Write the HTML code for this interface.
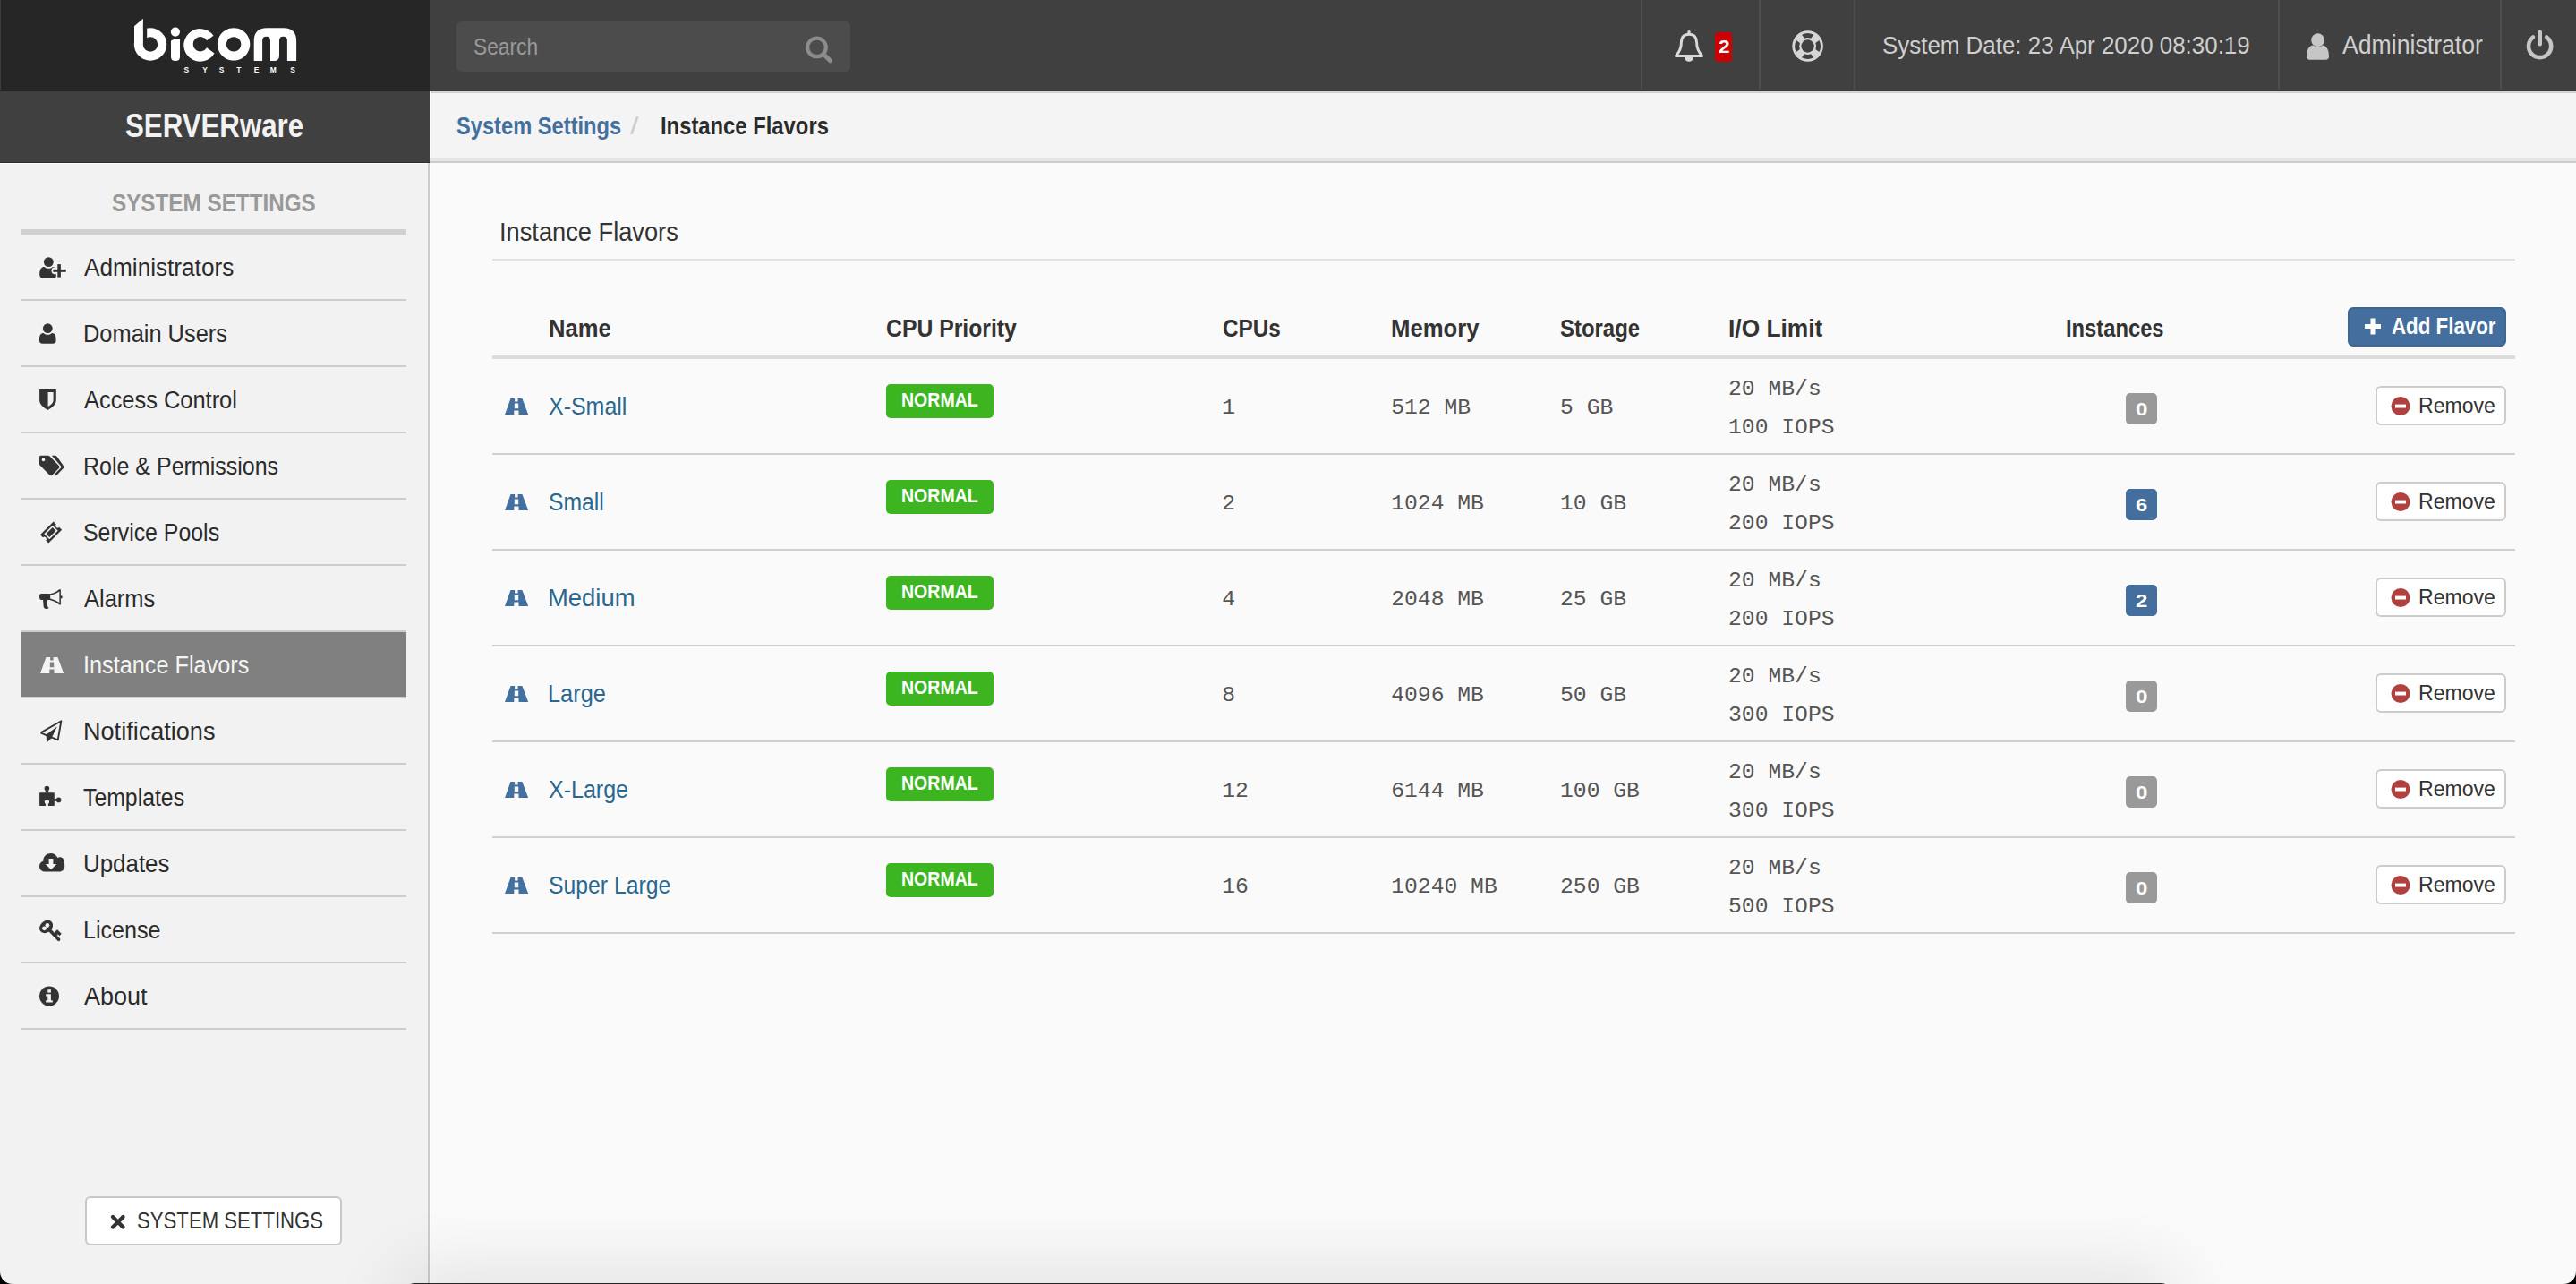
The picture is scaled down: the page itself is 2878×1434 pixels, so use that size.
<!DOCTYPE html>
<html><head><meta charset="utf-8"><style>
html,body{margin:0;padding:0;width:2878px;height:1434px;overflow:hidden;background:#fafafa}
.t{position:absolute;white-space:nowrap}
.m{position:absolute;white-space:nowrap;font-family:"Liberation Mono",monospace;font-size:24.70px;line-height:24.70px;color:#555555}
</style></head><body>
<div style="position:absolute;left:0px;top:0px;width:2878px;height:1434px;background:#fafafa;"></div>
<div style="position:absolute;left:0px;top:0px;width:480px;height:102px;background:#262626;"></div>
<div style="position:absolute;left:480px;top:0px;width:2398px;height:102px;background:#404040;"></div>
<div style="position:absolute;left:0px;top:102px;width:480px;height:80px;background:#404040;"></div>
<div style="position:absolute;left:480px;top:102px;width:2398px;height:74px;background:#f4f4f4;"></div>
<div style="position:absolute;left:480px;top:176px;width:2398px;height:4px;background:#e6e6e6;"></div>
<div style="position:absolute;left:480px;top:180px;width:2398px;height:2px;background:#cccccc;"></div>
<div style="position:absolute;left:0px;top:182px;width:478px;height:1252px;background:#f2f2f2;"></div>
<div style="position:absolute;left:478px;top:182px;width:2px;height:1252px;background:#cccccc;"></div>
<div style="position:absolute;left:480px;top:101px;width:2398px;height:1px;background:#383838;"></div>
<div style="position:absolute;left:0px;top:101px;width:480px;height:1px;background:#222222;"></div>
<div style="position:absolute;left:0px;top:0px;width:1px;height:101px;background:#3c3c3c;"></div>
<div style="position:absolute;left:480px;top:102px;width:2398px;height:1px;background:#d9d9d9;"></div>
<div style="position:absolute;left:480px;top:103px;width:2398px;height:1px;background:#cdcdcd;"></div>
<div style="position:absolute;left:480px;top:102px;width:1px;height:74px;background:#ffffff;"></div>
<div style="position:absolute;left:480px;top:182px;width:1px;height:1252px;background:#ffffff;"></div>
<div style="position:absolute;left:0px;top:181px;width:480px;height:1px;background:#2b2b2b;"></div>
<div style="position:absolute;left:0px;top:182px;width:478px;height:1px;background:#ffffff;"></div>
<svg style="position:absolute;left:0px;top:0px;overflow:visible" width="480" height="102" viewBox="0 0 480 102">
<g fill="#ffffff">
<circle cx="168" cy="49.5" r="18.2"/><path d="M150 29.3 L159.9 20.7 L159.9 49.5 L150 49.5 Z"/><rect x="159.9" y="29" width="4.3" height="20.5" fill="#262626"/><circle cx="168" cy="49.5" r="8.2" fill="#262626"/>
<circle cx="195.9" cy="35.6" r="5.1"/>
<path d="M191 45.5 Q195.5 42.5 201 43.5 L201 63.5 Q201 68 196 68 Q191 68 191 63.5 Z"/>
<path d="M238.5 39.8 A18.3 18.3 0 1 0 239.5 59.4 L231 53.3 A8.2 8.2 0 1 1 231 45.2 Z"/>
<path d="M261.1 31.2 A18.2 18.2 0 1 1 261.09 31.2 Z M261.1 41.2 A8.2 8.2 0 1 0 261.11 41.2 Z" fill-rule="evenodd"/>
<path d="M283.7 68 L283.7 46 Q283.7 31.3 298 31.3 L317 31.3 Q331.1 31.3 331.1 46 L331.1 68 L320.9 68 L320.9 45 Q320.9 40.7 316.5 40.7 Q312 40.7 312 45 L312 62 Q312 68 306 68 L302 68 L302 45 Q302 40.7 297.7 40.7 Q293.1 40.7 293.1 45 L293.1 68 Z"/>
</g>
<g fill="#ffffff" font-family="Liberation Sans" font-weight="bold" font-size="8.4"><text x="205.6" y="81.4">S</text><text x="226.3" y="81.4">Y</text><text x="244.8" y="81.4">S</text><text x="264.2" y="81.4">T</text><text x="283.7" y="81.4">E</text><text x="301.7" y="81.4">M</text><text x="324.3" y="81.4">S</text></g></svg>
<div style="position:absolute;left:510px;top:24px;width:440px;height:56px;background:#4c4c4c;border-radius:6px"></div>
<div style="position:absolute;left:879px;top:24px;width:1px;height:56px;background:#4a4a4a;"></div>
<div class="t" style="left:529.37px;top:38.88px;font-family:'Liberation Sans', sans-serif;font-weight:normal;font-size:26.02px;line-height:26.02px;color:#9a9a9a;transform:scaleX(0.8748);transform-origin:0 0;">Search</div>
<svg style="position:absolute;left:895px;top:36px;overflow:visible" width="40" height="40" viewBox="0 0 40 40"><circle cx="17.5" cy="16.9" r="10.3" fill="none" stroke="#8c8c8c" stroke-width="4.2"/><path d="M24.8 24.2 L32.5 31.8" stroke="#8c8c8c" stroke-width="4.8" stroke-linecap="round"/></svg>
<div style="position:absolute;left:1833px;top:0px;width:2px;height:100px;background:#4e4e4e;"></div>
<div style="position:absolute;left:1965px;top:0px;width:2px;height:100px;background:#4e4e4e;"></div>
<div style="position:absolute;left:2071px;top:0px;width:2px;height:100px;background:#4e4e4e;"></div>
<div style="position:absolute;left:2545px;top:0px;width:2px;height:100px;background:#4e4e4e;"></div>
<div style="position:absolute;left:2793px;top:0px;width:2px;height:100px;background:#4e4e4e;"></div>
<svg style="position:absolute;left:1868px;top:30px;overflow:visible" width="40" height="45" viewBox="0 0 40 45"><path d="M19 8.2 C12.6 8.2 10.4 12.5 10.4 17.5 C10.4 24 8.2 28.3 4.3 32.5 L33.7 32.5 C29.8 28.3 27.6 24 27.6 17.5 C27.6 12.5 25.4 8.2 19 8.2 Z" fill="none" stroke="#d9d9d9" stroke-width="2.9" stroke-linejoin="round"/><circle cx="19" cy="5.9" r="1.8" fill="#d9d9d9"/><path d="M14 33.5 A5 5.2 0 0 0 24 33.5 Z" fill="#d9d9d9"/></svg>
<div style="position:absolute;left:1916px;top:36px;width:19px;height:33px;background:#cc0000;border-radius:4px"></div>
<div class="t" style="left:1919.72px;top:42.28px;font-family:'Liberation Sans', sans-serif;font-weight:bold;font-size:20.93px;line-height:20.93px;color:#ffffff;transform:scaleX(1.0817);transform-origin:0 0;">2</div>
<svg style="position:absolute;left:2000px;top:32px;overflow:visible" width="40" height="40" viewBox="0 0 40 40"><circle cx="19.6" cy="19.5" r="17.3" fill="#d6d6d6"/><path d="M16.00 10.82 L13.00 6.70 A14.4 14.4 0 0 1 26.20 6.70 L23.20 10.82 A9.4 9.4 0 0 0 16.00 10.82 Z" fill="#404040"/><path d="M28.28 15.90 L32.40 12.90 A14.4 14.4 0 0 1 32.40 26.10 L28.28 23.10 A9.4 9.4 0 0 0 28.28 15.90 Z" fill="#404040"/><path d="M23.20 28.18 L26.20 32.30 A14.4 14.4 0 0 1 13.00 32.30 L16.00 28.18 A9.4 9.4 0 0 0 23.20 28.18 Z" fill="#404040"/><path d="M10.92 23.10 L6.80 26.10 A14.4 14.4 0 0 1 6.80 12.90 L10.92 15.90 A9.4 9.4 0 0 0 10.92 23.10 Z" fill="#404040"/><circle cx="19.6" cy="19.5" r="7.2" fill="#404040"/></svg>
<div class="t" style="left:2103.02px;top:36.01px;font-family:'Liberation Sans', sans-serif;font-weight:normal;font-size:28.34px;line-height:28.34px;color:#cfcfcf;transform:scaleX(0.9150);transform-origin:0 0;">System Date: 23 Apr 2020 08:30:19</div>
<svg style="position:absolute;left:2575px;top:34px;overflow:visible" width="30" height="35" viewBox="0 0 30 35"><circle cx="14.6" cy="10.7" r="7.4" fill="#c6c6c6"/><path d="M2 29 C2 21 5 16.6 9.5 16.4 C11 17.8 12.6 18.4 14.6 18.4 C16.6 18.4 18.2 17.8 19.7 16.4 C24.2 16.6 27 21 27 29 C27 31.5 25.5 32.8 23.5 32.8 L5.5 32.8 C3.5 32.8 2 31.5 2 29 Z" fill="#c6c6c6"/></svg>
<div class="t" style="left:2617.35px;top:36.06px;font-family:'Liberation Sans', sans-serif;font-weight:normal;font-size:28.63px;line-height:28.63px;color:#cfcfcf;transform:scaleX(0.9308);transform-origin:0 0;">Administrator</div>
<svg style="position:absolute;left:2818px;top:31.4px;overflow:visible" width="40" height="42" viewBox="0 0 40 42"><path d="M12 10.5 A12.6 12.6 0 1 0 27.2 10.5" fill="none" stroke="#c6c6c6" stroke-width="4.6" stroke-linecap="round"/><path d="M19.6 5 L19.6 18.2" stroke="#c6c6c6" stroke-width="4.8" stroke-linecap="round"/></svg>
<div class="t" style="left:140.10px;top:122.26px;font-family:'Liberation Sans', sans-serif;font-weight:bold;font-size:37.50px;line-height:37.50px;color:#f2f2f2;transform:scaleX(0.8330);transform-origin:0 0;">SERVERware</div>
<div class="t" style="left:509.52px;top:126.87px;font-family:'Liberation Sans', sans-serif;font-weight:bold;font-size:27.33px;line-height:27.33px;color:#43709f;transform:scaleX(0.8662);transform-origin:0 0;">System Settings</div>
<div class="t" style="left:704.00px;top:126.62px;font-family:'Liberation Sans', sans-serif;font-weight:normal;font-size:27.62px;line-height:27.62px;color:#cccccc;transform:scaleX(1.2382);transform-origin:0 0;">/</div>
<div class="t" style="left:737.51px;top:126.87px;font-family:'Liberation Sans', sans-serif;font-weight:bold;font-size:27.33px;line-height:27.33px;color:#2b2b2b;transform:scaleX(0.8712);transform-origin:0 0;">Instance Flavors</div>
<div class="t" style="left:125.10px;top:211.88px;font-family:'Liberation Sans', sans-serif;font-weight:bold;font-size:28.49px;line-height:28.49px;color:#999999;transform:scaleX(0.8517);transform-origin:0 0;">SYSTEM SETTINGS</div>
<div style="position:absolute;left:24px;top:256px;width:430px;height:6px;background:#d0d0d0;"></div>
<div style="position:absolute;left:24px;top:334px;width:430px;height:2px;background:#cccccc;"></div>
<div class="t" style="left:94.35px;top:284.62px;font-family:'Liberation Sans', sans-serif;font-weight:normal;font-size:27.62px;line-height:27.62px;color:#2b2b2b;transform:scaleX(0.9479);transform-origin:0 0;">Administrators</div>
<div style="position:absolute;left:24px;top:408px;width:430px;height:2px;background:#cccccc;"></div>
<div class="t" style="left:93.22px;top:358.62px;font-family:'Liberation Sans', sans-serif;font-weight:normal;font-size:27.62px;line-height:27.62px;color:#2b2b2b;transform:scaleX(0.9203);transform-origin:0 0;">Domain Users</div>
<div style="position:absolute;left:24px;top:482px;width:430px;height:2px;background:#cccccc;"></div>
<div class="t" style="left:93.85px;top:432.62px;font-family:'Liberation Sans', sans-serif;font-weight:normal;font-size:27.62px;line-height:27.62px;color:#2b2b2b;transform:scaleX(0.9205);transform-origin:0 0;">Access Control</div>
<div style="position:absolute;left:24px;top:556px;width:430px;height:2px;background:#cccccc;"></div>
<div class="t" style="left:93.35px;top:506.62px;font-family:'Liberation Sans', sans-serif;font-weight:normal;font-size:27.62px;line-height:27.62px;color:#2b2b2b;transform:scaleX(0.9054);transform-origin:0 0;">Role &amp; Permissions</div>
<div style="position:absolute;left:24px;top:630px;width:430px;height:2px;background:#cccccc;"></div>
<div class="t" style="left:93.47px;top:580.62px;font-family:'Liberation Sans', sans-serif;font-weight:normal;font-size:27.62px;line-height:27.62px;color:#2b2b2b;transform:scaleX(0.9010);transform-origin:0 0;">Service Pools</div>
<div style="position:absolute;left:24px;top:704px;width:430px;height:2px;background:#cccccc;"></div>
<div class="t" style="left:93.85px;top:654.62px;font-family:'Liberation Sans', sans-serif;font-weight:normal;font-size:27.62px;line-height:27.62px;color:#2b2b2b;transform:scaleX(0.9226);transform-origin:0 0;">Alarms</div>
<div style="position:absolute;left:24px;top:706px;width:430px;height:72px;background:#808080;"></div>
<div style="position:absolute;left:24px;top:778px;width:430px;height:2px;background:#cccccc;"></div>
<div class="t" style="left:93.17px;top:728.62px;font-family:'Liberation Sans', sans-serif;font-weight:normal;font-size:27.62px;line-height:27.62px;color:#f4f4f4;transform:scaleX(0.9153);transform-origin:0 0;">Instance Flavors</div>
<div style="position:absolute;left:24px;top:852px;width:430px;height:2px;background:#cccccc;"></div>
<div class="t" style="left:93.28px;top:802.62px;font-family:'Liberation Sans', sans-serif;font-weight:normal;font-size:27.62px;line-height:27.62px;color:#2b2b2b;transform:scaleX(0.9806);transform-origin:0 0;">Notifications</div>
<div style="position:absolute;left:24px;top:926px;width:430px;height:2px;background:#cccccc;"></div>
<div class="t" style="left:93.44px;top:876.62px;font-family:'Liberation Sans', sans-serif;font-weight:normal;font-size:27.62px;line-height:27.62px;color:#2b2b2b;transform:scaleX(0.8986);transform-origin:0 0;">Templates</div>
<div style="position:absolute;left:24px;top:1000px;width:430px;height:2px;background:#cccccc;"></div>
<div class="t" style="left:93.10px;top:950.62px;font-family:'Liberation Sans', sans-serif;font-weight:normal;font-size:27.62px;line-height:27.62px;color:#2b2b2b;transform:scaleX(0.9375);transform-origin:0 0;">Updates</div>
<div style="position:absolute;left:24px;top:1074px;width:430px;height:2px;background:#cccccc;"></div>
<div class="t" style="left:93.04px;top:1024.62px;font-family:'Liberation Sans', sans-serif;font-weight:normal;font-size:27.62px;line-height:27.62px;color:#2b2b2b;transform:scaleX(0.9095);transform-origin:0 0;">License</div>
<div style="position:absolute;left:24px;top:1148px;width:430px;height:2px;background:#cccccc;"></div>
<div class="t" style="left:93.95px;top:1098.62px;font-family:'Liberation Sans', sans-serif;font-weight:normal;font-size:27.62px;line-height:27.62px;color:#2b2b2b;transform:scaleX(0.9776);transform-origin:0 0;">About</div>
<svg style="position:absolute;left:44px;top:287px;overflow:visible" width="32" height="24" viewBox="0 0 32 24"><circle cx="10.3" cy="5.6" r="5.4" fill="#333333"/><path d="M0.2 19 C0.2 13.5 2.5 10.9 5.5 10.9 C7 12.2 8.5 12.7 10.3 12.7 C12.1 12.7 13.6 12.2 15.1 10.9 C16.8 10.9 18 11.2 18.6 11.6 L18.8 20.5 L18.8 21.5 C18.7 23 17.8 23.6 16.3 23.6 L3.7 23.6 C1.4 23.6 0.2 22 0.2 19 Z" fill="#333333"/><circle cx="17.6" cy="15.3" r="4.1" fill="#f2f2f2"/><rect x="20.3" y="8.1" width="3.6" height="14.5" fill="#333333"/><rect x="15.3" y="13.9" width="14.4" height="2.9" fill="#333333"/></svg>
<svg style="position:absolute;left:44px;top:361px;overflow:visible" width="20" height="24" viewBox="0 0 20 24"><circle cx="9.3" cy="5.7" r="5.4" fill="#333333"/><path d="M0 17.5 C0 13 2 11 4.5 11 C6 12.3 7.5 12.8 9.3 12.8 C11.1 12.8 12.6 12.3 14.1 11 C16.6 11 18.6 13 18.6 17.5 L18.6 19.8 C18.6 21.8 17 22.7 15.2 22.7 L3.4 22.7 C1.6 22.7 0 21.8 0 19.8 Z" fill="#333333"/></svg>
<svg style="position:absolute;left:44px;top:435px;overflow:visible" width="20" height="24" viewBox="0 0 20 24"><path d="M0.1 0 L18.8 0 L18.8 12 C18.8 17 13.5 20.6 9.4 22.9 C5.3 20.6 0.1 17 0.1 12 Z M9.6 3 L9.6 19.3 C12.3 17.6 15.6 15 15.6 12 L15.6 3 Z" fill="#333333" fill-rule="evenodd"/></svg>
<svg style="position:absolute;left:43px;top:508px;overflow:visible" width="30" height="25" viewBox="0 0 30 25"><path d="M1 2.5 C1 1.3 1.9 0.8 3 0.8 L10.5 0.8 C11.5 0.8 12.2 1.2 12.8 1.8 L22.8 12 C23.7 12.9 23.7 14.2 22.8 15.1 L15.5 22.5 C14.6 23.4 13.3 23.4 12.4 22.5 L2 12 C1.3 11.3 1 10.6 1 9.5 Z" fill="#333333"/><circle cx="5.5" cy="5.4" r="1.8" fill="#f2f2f2"/><path d="M14.8 0.8 L18.3 0.8 C19.3 0.8 20 1.2 20.6 1.8 L27.8 12 C28.7 12.9 28.7 14.2 27.8 15.1 L20.6 22.5 C19.7 23.4 18.4 23.4 17.5 22.5 L17.3 22.3 L25 14.4 C25.6 13.8 25.6 13.2 25 12.6 Z" fill="#333333"/></svg>
<svg style="position:absolute;left:44px;top:581px;overflow:visible" width="26" height="27" viewBox="0 0 26 27"><g transform="rotate(-45 13 13.5)"><path d="M2.5 6.9 L23.5 6.9 L23.5 11.1 A2.4 2.4 0 0 0 23.5 15.9 L23.5 20.1 L2.5 20.1 L2.5 15.9 A2.4 2.4 0 0 0 2.5 11.1 Z" fill="#333333"/><rect x="7.1" y="10.05" width="11.8" height="6.9" fill="none" stroke="#f2f2f2" stroke-width="1.6"/></g></svg>
<svg style="position:absolute;left:43px;top:656px;overflow:visible" width="29" height="26" viewBox="0 0 29 26"><path d="M11.8 7.4 Q18 6.5 23.2 2.3 Q24.9 1.2 24.9 3.5 L24.9 18.2 Q24.9 20.5 23.2 19.3 Q18 15 11.8 13.8 Z M13.2 8.8 Q18.5 8.2 23.4 4.5 L23.4 17.1 Q18.5 13.4 13.2 12.4 Z" fill="#333333" fill-rule="evenodd"/><path d="M3.3 7.1 L12.6 7.1 L12.6 13.9 L3.3 13.9 Q1.1 13.9 1.1 11.7 L1.1 9.3 Q1.1 7.1 3.3 7.1 Z" fill="#333333"/><path d="M5 13.5 L10.2 13.5 L9.8 19.5 Q9.9 22 11.8 23 Q10.6 23.9 8.4 23.9 Q6 23.9 5.6 21 Z" fill="#333333"/><path d="M24.8 9 Q26.8 9.5 26.8 10.85 Q26.8 12.2 24.8 12.7 Z" fill="#333333"/></svg>
<svg style="position:absolute;left:44.6px;top:734px;overflow:visible" width="27" height="18" viewBox="0 0 27 18"><path d="M6.5 0 L19.4 0 L26.2 18 L0 18 Z M11.1 0 L14.6 0 L14.6 3.5 L11.1 3.5 Z M10.8 5.4 L15.2 5.4 L15.2 11.3 L10.8 11.3 Z M10.3 13.6 L15.5 13.6 L15.5 18 L10.3 18 Z" fill="#f4f4f4" fill-rule="evenodd"/></svg>
<svg style="position:absolute;left:43px;top:803px;overflow:visible" width="29" height="28" viewBox="0 0 29 28"><path d="M2.4 15.4 L25.4 2.2 L21.7 23.4 L14.3 20.3 M9.3 18.3 L2.4 15.4" fill="none" stroke="#333333" stroke-width="1.9" stroke-linejoin="round"/><path d="M8.6 17.6 L20.8 8.6 L14.6 21.2 L9.2 26.6 Z" fill="#333333"/></svg>
<svg style="position:absolute;left:40px;top:875px;overflow:visible" width="32" height="30" viewBox="0 0 32 30"><rect x="4.1" y="10.3" width="16.7" height="14.7" rx="0.8" fill="#333333"/><circle cx="12.4" cy="5.6" r="2.8" fill="#333333"/><path d="M10.9 7 L13.9 7 L14.3 10.6 L10.5 10.6 Z" fill="#333333"/><circle cx="25.6" cy="18.4" r="2.8" fill="#333333"/><path d="M20.5 16.9 L24 17.3 L24 19.5 L20.5 19.9 Z" fill="#333333"/><circle cx="12.4" cy="20.6" r="2.6" fill="#f2f2f2"/><path d="M11.2 21.5 L13.6 21.5 L13.9 25.2 L10.9 25.2 Z" fill="#f2f2f2"/></svg>
<svg style="position:absolute;left:44px;top:952px;overflow:visible" width="29" height="23" viewBox="0 0 29 23"><path d="M6.5 21.5 C2.5 21.5 0 19 0 15.5 C0 12.8 1.8 10.5 4.3 9.8 C4.3 9.6 4.3 9.4 4.3 9.2 C4.3 4.2 8.3 1 12.8 1 C16.3 1 19.2 3 20.3 6 C21.2 5.5 22 5.3 23 5.3 C25.7 5.3 27.5 7.5 27.5 10 C27.5 10.4 27.4 10.8 27.3 11.2 C28.2 12.1 28.2 13.8 28.2 15.5 C28.2 19 25.7 21.5 22.2 21.5 Z" fill="#333333"/><path d="M10.6 7 L15.4 7 L15.4 13 L19.3 13 L13 19.2 L6.7 13 L10.6 13 Z" fill="#f2f2f2"/></svg>
<svg style="position:absolute;left:44px;top:1027px;overflow:visible" width="26" height="25" viewBox="0 0 26 25"><path d="M11.1 11.4 L21.6 22.3" stroke="#333333" stroke-width="3.6" stroke-linecap="round"/><path d="M18.9 12.4 L23.6 17" stroke="#333333" stroke-width="3.2"/><path d="M18.3 13 L19.6 17.6" stroke="#333333" stroke-width="2.6"/><g transform="rotate(-38 7.6 8)"><ellipse cx="7.6" cy="8" rx="8.2" ry="6.4" fill="#333333"/></g><circle cx="5.5" cy="9.8" r="2.4" fill="#f2f2f2"/><circle cx="8.9" cy="6.5" r="2.4" fill="#f2f2f2"/></svg>
<svg style="position:absolute;left:44px;top:1101px;overflow:visible" width="24" height="24" viewBox="0 0 24 24"><circle cx="11" cy="11.5" r="11" fill="#333333"/><rect x="9.3" y="4.2" width="3.6" height="3.4" fill="#f2f2f2"/><path d="M7.2 9.2 L12.9 9.2 L12.9 16.2 L14.8 16.2 L14.8 18.6 L7.2 18.6 L7.2 16.2 L9.3 16.2 L9.3 11.6 L7.2 11.6 Z" fill="#f2f2f2"/></svg>
<div style="position:absolute;left:95px;top:1336px;width:283px;height:51px;background:#ffffff;border:2px solid #c8c8c8;border-radius:6px"></div>
<svg style="position:absolute;left:123px;top:1356px;overflow:visible" width="19" height="19" viewBox="0 0 19 19"><path d="M3 3 L14.5 14.5 M14.5 3 L3 14.5" stroke="#333333" stroke-width="4.4" stroke-linecap="round"/></svg>
<div class="t" style="left:153.29px;top:1351.49px;font-family:'Liberation Sans', sans-serif;font-weight:normal;font-size:25.29px;line-height:25.29px;color:#333333;transform:scaleX(0.8768);transform-origin:0 0;">SYSTEM SETTINGS</div>
<div class="t" style="left:558.49px;top:243.98px;font-family:'Liberation Sans', sans-serif;font-weight:normal;font-size:29.80px;line-height:29.80px;color:#333333;transform:scaleX(0.9140);transform-origin:0 0;">Instance Flavors</div>
<div style="position:absolute;left:550px;top:289px;width:2260px;height:2px;background:#e0e0e0;"></div>
<div class="t" style="left:612.59px;top:352.55px;font-family:'Liberation Sans', sans-serif;font-weight:bold;font-size:28.05px;line-height:28.05px;color:#333333;transform:scaleX(0.9121);transform-origin:0 0;">Name</div>
<div class="t" style="left:989.98px;top:352.55px;font-family:'Liberation Sans', sans-serif;font-weight:bold;font-size:28.05px;line-height:28.05px;color:#333333;transform:scaleX(0.8827);transform-origin:0 0;">CPU Priority</div>
<div class="t" style="left:1366.10px;top:352.55px;font-family:'Liberation Sans', sans-serif;font-weight:bold;font-size:28.05px;line-height:28.05px;color:#333333;transform:scaleX(0.8673);transform-origin:0 0;">CPUs</div>
<div class="t" style="left:1554.28px;top:352.55px;font-family:'Liberation Sans', sans-serif;font-weight:bold;font-size:28.05px;line-height:28.05px;color:#333333;transform:scaleX(0.9172);transform-origin:0 0;">Memory</div>
<div class="t" style="left:1743.01px;top:352.55px;font-family:'Liberation Sans', sans-serif;font-weight:bold;font-size:28.05px;line-height:28.05px;color:#333333;transform:scaleX(0.8532);transform-origin:0 0;">Storage</div>
<div class="t" style="left:1931.34px;top:352.55px;font-family:'Liberation Sans', sans-serif;font-weight:bold;font-size:28.05px;line-height:28.05px;color:#333333;transform:scaleX(0.9392);transform-origin:0 0;">I/O Limit</div>
<div class="t" style="left:2307.91px;top:352.55px;font-family:'Liberation Sans', sans-serif;font-weight:bold;font-size:28.05px;line-height:28.05px;color:#333333;transform:scaleX(0.8466);transform-origin:0 0;">Instances</div>
<div style="position:absolute;left:2623px;top:343px;width:173px;height:40px;background:#436e9e;border:2px solid #3d6792;border-radius:6px"></div>
<svg style="position:absolute;left:2640px;top:354px;overflow:visible" width="22" height="22" viewBox="0 0 22 22"><path d="M11 1.5 L11 19.5 M2 10.5 L20 10.5" stroke="#ffffff" stroke-width="5"/></svg>
<div class="t" style="left:2671.74px;top:352.37px;font-family:'Liberation Sans', sans-serif;font-weight:bold;font-size:25.44px;line-height:25.44px;color:#ffffff;transform:scaleX(0.8769);transform-origin:0 0;">Add Flavor</div>
<div style="position:absolute;left:550px;top:397px;width:2260px;height:4px;background:#dcdcdc;"></div>
<div style="position:absolute;left:550px;top:506px;width:2260px;height:2px;background:#d0d0d0;"></div>
<svg style="position:absolute;left:563.6px;top:444.5px;overflow:visible" width="27" height="18" viewBox="0 0 27 18"><path d="M6.5 0 L19.4 0 L26.2 18 L0 18 Z M11.1 0 L14.6 0 L14.6 3.5 L11.1 3.5 Z M10.8 5.4 L15.2 5.4 L15.2 11.3 L10.8 11.3 Z M10.3 13.6 L15.5 13.6 L15.5 18 L10.3 18 Z" fill="#4470a0" fill-rule="evenodd"/></svg>
<div class="t" style="left:613.04px;top:438.91px;font-family:'Liberation Sans', sans-serif;font-weight:normal;font-size:28.34px;line-height:28.34px;color:#2a6890;transform:scaleX(0.8812);transform-origin:0 0;">X-Small</div>
<div style="position:absolute;left:990px;top:429.4px;width:120px;height:37.5px;background:#3cb521;border-radius:5px"></div>
<div class="t" style="left:1007.49px;top:436.99px;font-family:'Liberation Sans', sans-serif;font-weight:bold;font-size:21.51px;line-height:21.51px;color:#ffffff;transform:scaleX(0.9090);transform-origin:0 0;">NORMAL</div>
<div class="m" style="left:1365.2px;top:443.48px">1</div>
<div class="m" style="left:1554.2px;top:443.48px">512 MB</div>
<div class="m" style="left:1743.0px;top:443.48px">5 GB</div>
<div class="m" style="left:1931px;top:422.28px">20 MB/s</div>
<div class="m" style="left:1931px;top:464.78px">100 IOPS</div>
<div style="position:absolute;left:2375px;top:439px;width:34.5px;height:35px;background:#999999;border-radius:5px"></div>
<div class="t" style="left:2385.54px;top:446.16px;font-family:'Liberation Sans', sans-serif;font-weight:bold;font-size:21.08px;line-height:21.08px;color:#ffffff;transform:scaleX(1.1473);transform-origin:0 0;">0</div>
<div style="position:absolute;left:2654px;top:431px;width:142px;height:39.5px;background:#ffffff;border:2px solid #cccccc;border-radius:6px"></div>
<svg style="position:absolute;left:2671px;top:443px;overflow:visible" width="22" height="22" viewBox="0 0 22 22"><circle cx="11" cy="10.5" r="10.5" fill="#b0413e"/><rect x="5" y="8.6" width="12" height="3.9" fill="#ffffff"/></svg>
<div class="t" style="left:2702.41px;top:441.54px;font-family:'Liberation Sans', sans-serif;font-weight:normal;font-size:23.69px;line-height:23.69px;color:#333333;transform:scaleX(0.9727);transform-origin:0 0;">Remove</div>
<div style="position:absolute;left:550px;top:613px;width:2260px;height:2px;background:#d0d0d0;"></div>
<svg style="position:absolute;left:563.6px;top:551.5px;overflow:visible" width="27" height="18" viewBox="0 0 27 18"><path d="M6.5 0 L19.4 0 L26.2 18 L0 18 Z M11.1 0 L14.6 0 L14.6 3.5 L11.1 3.5 Z M10.8 5.4 L15.2 5.4 L15.2 11.3 L10.8 11.3 Z M10.3 13.6 L15.5 13.6 L15.5 18 L10.3 18 Z" fill="#4470a0" fill-rule="evenodd"/></svg>
<div class="t" style="left:612.68px;top:545.91px;font-family:'Liberation Sans', sans-serif;font-weight:normal;font-size:28.34px;line-height:28.34px;color:#2a6890;transform:scaleX(0.8731);transform-origin:0 0;">Small</div>
<div style="position:absolute;left:990px;top:536.4px;width:120px;height:37.5px;background:#3cb521;border-radius:5px"></div>
<div class="t" style="left:1007.49px;top:543.99px;font-family:'Liberation Sans', sans-serif;font-weight:bold;font-size:21.51px;line-height:21.51px;color:#ffffff;transform:scaleX(0.9090);transform-origin:0 0;">NORMAL</div>
<div class="m" style="left:1365.2px;top:550.48px">2</div>
<div class="m" style="left:1554.2px;top:550.48px">1024 MB</div>
<div class="m" style="left:1743.0px;top:550.48px">10 GB</div>
<div class="m" style="left:1931px;top:529.28px">20 MB/s</div>
<div class="m" style="left:1931px;top:571.78px">200 IOPS</div>
<div style="position:absolute;left:2375px;top:546px;width:34.5px;height:35px;background:#436e9e;border-radius:5px"></div>
<div class="t" style="left:2385.63px;top:553.16px;font-family:'Liberation Sans', sans-serif;font-weight:bold;font-size:21.08px;line-height:21.08px;color:#ffffff;transform:scaleX(1.1288);transform-origin:0 0;">6</div>
<div style="position:absolute;left:2654px;top:538px;width:142px;height:39.5px;background:#ffffff;border:2px solid #cccccc;border-radius:6px"></div>
<svg style="position:absolute;left:2671px;top:550px;overflow:visible" width="22" height="22" viewBox="0 0 22 22"><circle cx="11" cy="10.5" r="10.5" fill="#b0413e"/><rect x="5" y="8.6" width="12" height="3.9" fill="#ffffff"/></svg>
<div class="t" style="left:2702.41px;top:548.54px;font-family:'Liberation Sans', sans-serif;font-weight:normal;font-size:23.69px;line-height:23.69px;color:#333333;transform:scaleX(0.9727);transform-origin:0 0;">Remove</div>
<div style="position:absolute;left:550px;top:720px;width:2260px;height:2px;background:#d0d0d0;"></div>
<svg style="position:absolute;left:563.6px;top:658.5px;overflow:visible" width="27" height="18" viewBox="0 0 27 18"><path d="M6.5 0 L19.4 0 L26.2 18 L0 18 Z M11.1 0 L14.6 0 L14.6 3.5 L11.1 3.5 Z M10.8 5.4 L15.2 5.4 L15.2 11.3 L10.8 11.3 Z M10.3 13.6 L15.5 13.6 L15.5 18 L10.3 18 Z" fill="#4470a0" fill-rule="evenodd"/></svg>
<div class="t" style="left:611.55px;top:652.91px;font-family:'Liberation Sans', sans-serif;font-weight:normal;font-size:28.34px;line-height:28.34px;color:#2a6890;transform:scaleX(0.9678);transform-origin:0 0;">Medium</div>
<div style="position:absolute;left:990px;top:643.4px;width:120px;height:37.5px;background:#3cb521;border-radius:5px"></div>
<div class="t" style="left:1007.49px;top:650.99px;font-family:'Liberation Sans', sans-serif;font-weight:bold;font-size:21.51px;line-height:21.51px;color:#ffffff;transform:scaleX(0.9090);transform-origin:0 0;">NORMAL</div>
<div class="m" style="left:1365.2px;top:657.48px">4</div>
<div class="m" style="left:1554.2px;top:657.48px">2048 MB</div>
<div class="m" style="left:1743.0px;top:657.48px">25 GB</div>
<div class="m" style="left:1931px;top:636.28px">20 MB/s</div>
<div class="m" style="left:1931px;top:678.78px">200 IOPS</div>
<div style="position:absolute;left:2375px;top:653px;width:34.5px;height:35px;background:#436e9e;border-radius:5px"></div>
<div class="t" style="left:2385.67px;top:660.16px;font-family:'Liberation Sans', sans-serif;font-weight:bold;font-size:21.08px;line-height:21.08px;color:#ffffff;transform:scaleX(1.1334);transform-origin:0 0;">2</div>
<div style="position:absolute;left:2654px;top:645px;width:142px;height:39.5px;background:#ffffff;border:2px solid #cccccc;border-radius:6px"></div>
<svg style="position:absolute;left:2671px;top:657px;overflow:visible" width="22" height="22" viewBox="0 0 22 22"><circle cx="11" cy="10.5" r="10.5" fill="#b0413e"/><rect x="5" y="8.6" width="12" height="3.9" fill="#ffffff"/></svg>
<div class="t" style="left:2702.41px;top:655.54px;font-family:'Liberation Sans', sans-serif;font-weight:normal;font-size:23.69px;line-height:23.69px;color:#333333;transform:scaleX(0.9727);transform-origin:0 0;">Remove</div>
<div style="position:absolute;left:550px;top:827px;width:2260px;height:2px;background:#d0d0d0;"></div>
<svg style="position:absolute;left:563.6px;top:765.5px;overflow:visible" width="27" height="18" viewBox="0 0 27 18"><path d="M6.5 0 L19.4 0 L26.2 18 L0 18 Z M11.1 0 L14.6 0 L14.6 3.5 L11.1 3.5 Z M10.8 5.4 L15.2 5.4 L15.2 11.3 L10.8 11.3 Z M10.3 13.6 L15.5 13.6 L15.5 18 L10.3 18 Z" fill="#4470a0" fill-rule="evenodd"/></svg>
<div class="t" style="left:611.72px;top:759.91px;font-family:'Liberation Sans', sans-serif;font-weight:normal;font-size:28.34px;line-height:28.34px;color:#2a6890;transform:scaleX(0.8954);transform-origin:0 0;">Large</div>
<div style="position:absolute;left:990px;top:750.4px;width:120px;height:37.5px;background:#3cb521;border-radius:5px"></div>
<div class="t" style="left:1007.49px;top:757.99px;font-family:'Liberation Sans', sans-serif;font-weight:bold;font-size:21.51px;line-height:21.51px;color:#ffffff;transform:scaleX(0.9090);transform-origin:0 0;">NORMAL</div>
<div class="m" style="left:1365.2px;top:764.48px">8</div>
<div class="m" style="left:1554.2px;top:764.48px">4096 MB</div>
<div class="m" style="left:1743.0px;top:764.48px">50 GB</div>
<div class="m" style="left:1931px;top:743.28px">20 MB/s</div>
<div class="m" style="left:1931px;top:785.78px">300 IOPS</div>
<div style="position:absolute;left:2375px;top:760px;width:34.5px;height:35px;background:#999999;border-radius:5px"></div>
<div class="t" style="left:2385.54px;top:767.16px;font-family:'Liberation Sans', sans-serif;font-weight:bold;font-size:21.08px;line-height:21.08px;color:#ffffff;transform:scaleX(1.1473);transform-origin:0 0;">0</div>
<div style="position:absolute;left:2654px;top:752px;width:142px;height:39.5px;background:#ffffff;border:2px solid #cccccc;border-radius:6px"></div>
<svg style="position:absolute;left:2671px;top:764px;overflow:visible" width="22" height="22" viewBox="0 0 22 22"><circle cx="11" cy="10.5" r="10.5" fill="#b0413e"/><rect x="5" y="8.6" width="12" height="3.9" fill="#ffffff"/></svg>
<div class="t" style="left:2702.41px;top:762.54px;font-family:'Liberation Sans', sans-serif;font-weight:normal;font-size:23.69px;line-height:23.69px;color:#333333;transform:scaleX(0.9727);transform-origin:0 0;">Remove</div>
<div style="position:absolute;left:550px;top:934px;width:2260px;height:2px;background:#d0d0d0;"></div>
<svg style="position:absolute;left:563.6px;top:872.5px;overflow:visible" width="27" height="18" viewBox="0 0 27 18"><path d="M6.5 0 L19.4 0 L26.2 18 L0 18 Z M11.1 0 L14.6 0 L14.6 3.5 L11.1 3.5 Z M10.8 5.4 L15.2 5.4 L15.2 11.3 L10.8 11.3 Z M10.3 13.6 L15.5 13.6 L15.5 18 L10.3 18 Z" fill="#4470a0" fill-rule="evenodd"/></svg>
<div class="t" style="left:612.94px;top:866.91px;font-family:'Liberation Sans', sans-serif;font-weight:normal;font-size:28.34px;line-height:28.34px;color:#2a6890;transform:scaleX(0.8834);transform-origin:0 0;">X-Large</div>
<div style="position:absolute;left:990px;top:857.4px;width:120px;height:37.5px;background:#3cb521;border-radius:5px"></div>
<div class="t" style="left:1007.49px;top:864.99px;font-family:'Liberation Sans', sans-serif;font-weight:bold;font-size:21.51px;line-height:21.51px;color:#ffffff;transform:scaleX(0.9090);transform-origin:0 0;">NORMAL</div>
<div class="m" style="left:1365.2px;top:871.48px">12</div>
<div class="m" style="left:1554.2px;top:871.48px">6144 MB</div>
<div class="m" style="left:1743.0px;top:871.48px">100 GB</div>
<div class="m" style="left:1931px;top:850.28px">20 MB/s</div>
<div class="m" style="left:1931px;top:892.78px">300 IOPS</div>
<div style="position:absolute;left:2375px;top:867px;width:34.5px;height:35px;background:#999999;border-radius:5px"></div>
<div class="t" style="left:2385.54px;top:874.16px;font-family:'Liberation Sans', sans-serif;font-weight:bold;font-size:21.08px;line-height:21.08px;color:#ffffff;transform:scaleX(1.1473);transform-origin:0 0;">0</div>
<div style="position:absolute;left:2654px;top:859px;width:142px;height:39.5px;background:#ffffff;border:2px solid #cccccc;border-radius:6px"></div>
<svg style="position:absolute;left:2671px;top:871px;overflow:visible" width="22" height="22" viewBox="0 0 22 22"><circle cx="11" cy="10.5" r="10.5" fill="#b0413e"/><rect x="5" y="8.6" width="12" height="3.9" fill="#ffffff"/></svg>
<div class="t" style="left:2702.41px;top:869.54px;font-family:'Liberation Sans', sans-serif;font-weight:normal;font-size:23.69px;line-height:23.69px;color:#333333;transform:scaleX(0.9727);transform-origin:0 0;">Remove</div>
<div style="position:absolute;left:550px;top:1041px;width:2260px;height:2px;background:#d0d0d0;"></div>
<svg style="position:absolute;left:563.6px;top:979.5px;overflow:visible" width="27" height="18" viewBox="0 0 27 18"><path d="M6.5 0 L19.4 0 L26.2 18 L0 18 Z M11.1 0 L14.6 0 L14.6 3.5 L11.1 3.5 Z M10.8 5.4 L15.2 5.4 L15.2 11.3 L10.8 11.3 Z M10.3 13.6 L15.5 13.6 L15.5 18 L10.3 18 Z" fill="#4470a0" fill-rule="evenodd"/></svg>
<div class="t" style="left:612.67px;top:973.91px;font-family:'Liberation Sans', sans-serif;font-weight:normal;font-size:28.34px;line-height:28.34px;color:#2a6890;transform:scaleX(0.8745);transform-origin:0 0;">Super Large</div>
<div style="position:absolute;left:990px;top:964.4px;width:120px;height:37.5px;background:#3cb521;border-radius:5px"></div>
<div class="t" style="left:1007.49px;top:971.99px;font-family:'Liberation Sans', sans-serif;font-weight:bold;font-size:21.51px;line-height:21.51px;color:#ffffff;transform:scaleX(0.9090);transform-origin:0 0;">NORMAL</div>
<div class="m" style="left:1365.2px;top:978.48px">16</div>
<div class="m" style="left:1554.2px;top:978.48px">10240 MB</div>
<div class="m" style="left:1743.0px;top:978.48px">250 GB</div>
<div class="m" style="left:1931px;top:957.28px">20 MB/s</div>
<div class="m" style="left:1931px;top:999.78px">500 IOPS</div>
<div style="position:absolute;left:2375px;top:974px;width:34.5px;height:35px;background:#999999;border-radius:5px"></div>
<div class="t" style="left:2385.54px;top:981.16px;font-family:'Liberation Sans', sans-serif;font-weight:bold;font-size:21.08px;line-height:21.08px;color:#ffffff;transform:scaleX(1.1473);transform-origin:0 0;">0</div>
<div style="position:absolute;left:2654px;top:966px;width:142px;height:39.5px;background:#ffffff;border:2px solid #cccccc;border-radius:6px"></div>
<svg style="position:absolute;left:2671px;top:978px;overflow:visible" width="22" height="22" viewBox="0 0 22 22"><circle cx="11" cy="10.5" r="10.5" fill="#b0413e"/><rect x="5" y="8.6" width="12" height="3.9" fill="#ffffff"/></svg>
<div class="t" style="left:2702.41px;top:976.54px;font-family:'Liberation Sans', sans-serif;font-weight:normal;font-size:23.69px;line-height:23.69px;color:#333333;transform:scaleX(0.9727);transform-origin:0 0;">Remove</div>
<div style="position:absolute;left:455px;top:1433px;width:1968px;height:40px;background:#262626;border-radius:8px;box-shadow:0 0 80px 10px rgba(0,0,0,0.12)"></div>
<svg style="position:absolute;left:0px;top:1420px;overflow:visible" width="14" height="14" viewBox="0 0 14 14"><path d="M0 0 A14 14 0 0 0 14 14 L0 14 Z" fill="#000"/></svg>
<svg style="position:absolute;left:2864px;top:1420px;overflow:visible" width="14" height="14" viewBox="0 0 14 14"><path d="M14 0 A14 14 0 0 1 0 14 L14 14 Z" fill="#000"/></svg>
</body></html>
